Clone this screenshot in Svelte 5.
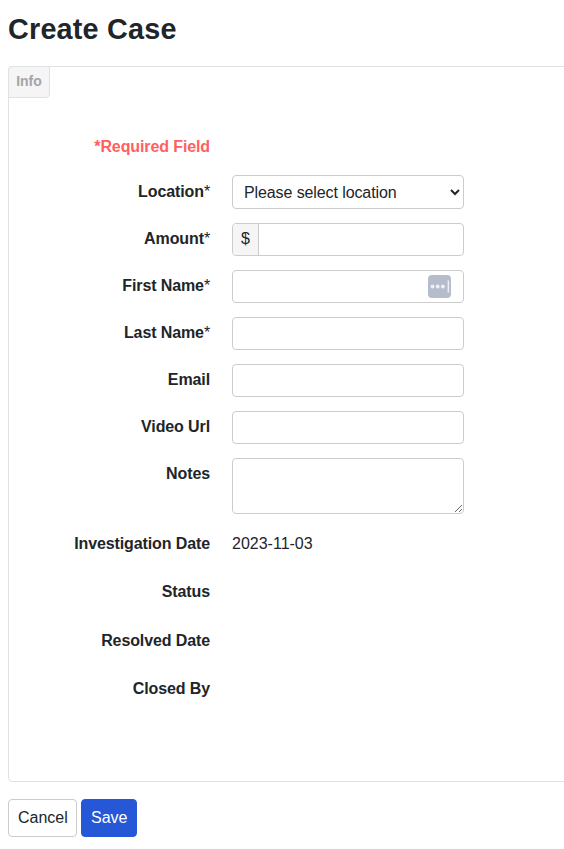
<script>
  const blanks = [
    { label: 'Last Name', req: true },
    { label: 'Email', req: false },
    { label: 'Video Url', req: false }
  ];
</script>

<div class="page">
  <h1>Create Case</h1>
  <div class="panel">
    <div class="tab">Info</div>
    <form class="form" onsubmit={(e) => e.preventDefault()}>
      <div class="row req-row">
        <div class="label required">*Required Field</div>
      </div>
      <div class="row first">
        <label class="label" for="loc">Location<span class="star">*</span></label>
        <select id="loc" class="field select"><option>Please select location</option></select>
      </div>
      <div class="row">
        <label class="label" for="amt">Amount<span class="star">*</span></label>
        <div class="field group">
          <span class="addon">$</span>
          <input id="amt" class="bare" />
        </div>
      </div>
      <div class="row">
        <label class="label" for="fn">First Name<span class="star">*</span></label>
        <div class="field group">
          <input id="fn" class="bare" />
          <span class="pm">
            <svg width="23" height="23" viewBox="0 0 23 23">
              <rect width="23" height="23" rx="4" fill="#b5bccb" />
              <circle cx="4.5" cy="11.5" r="1.9" fill="#eef0f4" />
              <circle cx="9.7" cy="11.5" r="1.9" fill="#eef0f4" />
              <circle cx="14.9" cy="11.5" r="1.9" fill="#eef0f4" />
              <rect x="19.6" y="5.5" width="1.5" height="12" fill="#eef0f4" />
            </svg>
          </span>
        </div>
      </div>
      {#each blanks as b}
        <div class="row">
          <label class="label" for={b.label}>{b.label}{#if b.req}<span class="star">*</span>{/if}</label>
          <input id={b.label} class="field" />
        </div>
      {/each}
      <div class="row">
        <label class="label" for="notes">Notes</label>
        <textarea id="notes" class="field area"></textarea>
      </div>
      <div class="row static date">
        <div class="label">Investigation Date</div>
        <div class="value">2023-11-03</div>
      </div>
      <div class="row static s1"><div class="label">Status</div></div>
      <div class="row static s2"><div class="label">Resolved Date</div></div>
      <div class="row static s3"><div class="label">Closed By</div></div>
    </form>
  </div>
  <div class="actions">
    <button class="btn cancel" type="button">Cancel</button>
    <button class="btn save" type="button">Save</button>
  </div>
</div>

<style>
  :global(body) {
    margin: 0;
    background: #fff;
    overflow: hidden;
  }
  .page {
    width: 564px;
    height: 849px;
    overflow: hidden;
    box-sizing: border-box;
    padding: 8px 0 0 8px;
    font-family: "Liberation Sans", Arial, sans-serif;
    font-size: 16px;
    color: #212529;
  }
  h1 {
    margin: 0 0 20px;
    height: 38px;
    font-size: 28.8px;
    letter-spacing: 0.2px;
    line-height: 42px;
    font-weight: 700;
    color: #212529;
  }
  .panel {
    box-sizing: border-box;
    width: 620px;
    height: 716px;
    border: 1px solid #dee2e6;
    border-radius: 4px;
    position: relative;
  }
  .tab {
    box-sizing: border-box;
    width: 42px;
    height: 32px;
    margin: -1px 0 0 -1px;
    background: #f5f5f5;
    border: 1px solid #dee2e6;
    border-radius: 4px 0 4px 0;
    color: #a3a5a9;
    font-size: 14px;
    font-weight: 700;
    line-height: 28px;
    text-align: center;
  }
  .form {
    display: flex;
    flex-direction: column;
    gap: 14px;
  }
  .row {
    display: flex;
    align-items: flex-start;
    gap: 22px;
  }
  .label {
    flex: 0 0 201px;
    text-align: right;
    font-weight: 700;
    letter-spacing: -0.11px;
    line-height: 24px;
    padding-top: 4px;
    color: #212529;
  }
  .star {
    font-weight: 400;
  }
  .req-row {
    height: 24px;
    margin-top: 37px;
    margin-bottom: 2px;
  }
  .required {
    color: #ff5f5f;
    padding-top: 0;
  }
  .field {
    box-sizing: border-box;
    width: 232px;
    height: 33px;
    margin: 0;
    border: 1px solid #ccc;
    border-radius: 4px;
    background: #fff;
    font: inherit;
    color: #212529;
    outline: none;
    display: block;
  }
  .select {
    height: 34px;
    padding: 0 0 0 7px;
    letter-spacing: -0.1px;
  }
  .first .label {
    padding-top: 5px;
  }
  .group {
    display: flex;
    overflow: hidden;
    position: relative;
  }
  .addon {
    width: 26px;
    flex: none;
    box-sizing: border-box;
    background: #f5f5f5;
    border-right: 1px solid #ccc;
    text-align: center;
    line-height: 29px;
  }
  .bare {
    flex: 1;
    min-width: 0;
    border: 0;
    padding: 0 12px;
    font: inherit;
    outline: none;
    background: transparent;
  }
  .pm {
    position: absolute;
    right: 12px;
    top: 4px;
    width: 23px;
    height: 23px;
    display: block;
  }
  .pm svg {
    display: block;
  }
  .area {
    height: 56px;
    resize: vertical;
    padding: 6px 12px;
  }
  .static .label {
    padding-top: 0;
  }
  .value {
    line-height: 24px;
  }
  .date {
    margin-top: 4px;
    height: 24px;
  }
  .s1 {
    margin-top: 10px;
    height: 24px;
  }
  .s2 {
    margin-top: 11px;
    height: 24px;
  }
  .s3 {
    margin-top: 10px;
    height: 24px;
  }
  .actions {
    display: flex;
    gap: 4px;
    margin-top: 17px;
  }
  .btn {
    box-sizing: border-box;
    height: 38px;
    border-radius: 4px;
    font: inherit;
    padding: 0 9px;
    margin: 0;
  }
  .cancel {
    width: 69px;
    background: #fff;
    border: 1px solid #ccc;
    color: #212529;
  }
  .save {
    width: 56px;
    background: #2557d6;
    border: 1px solid #2557d6;
    color: #fff;
  }
</style>
